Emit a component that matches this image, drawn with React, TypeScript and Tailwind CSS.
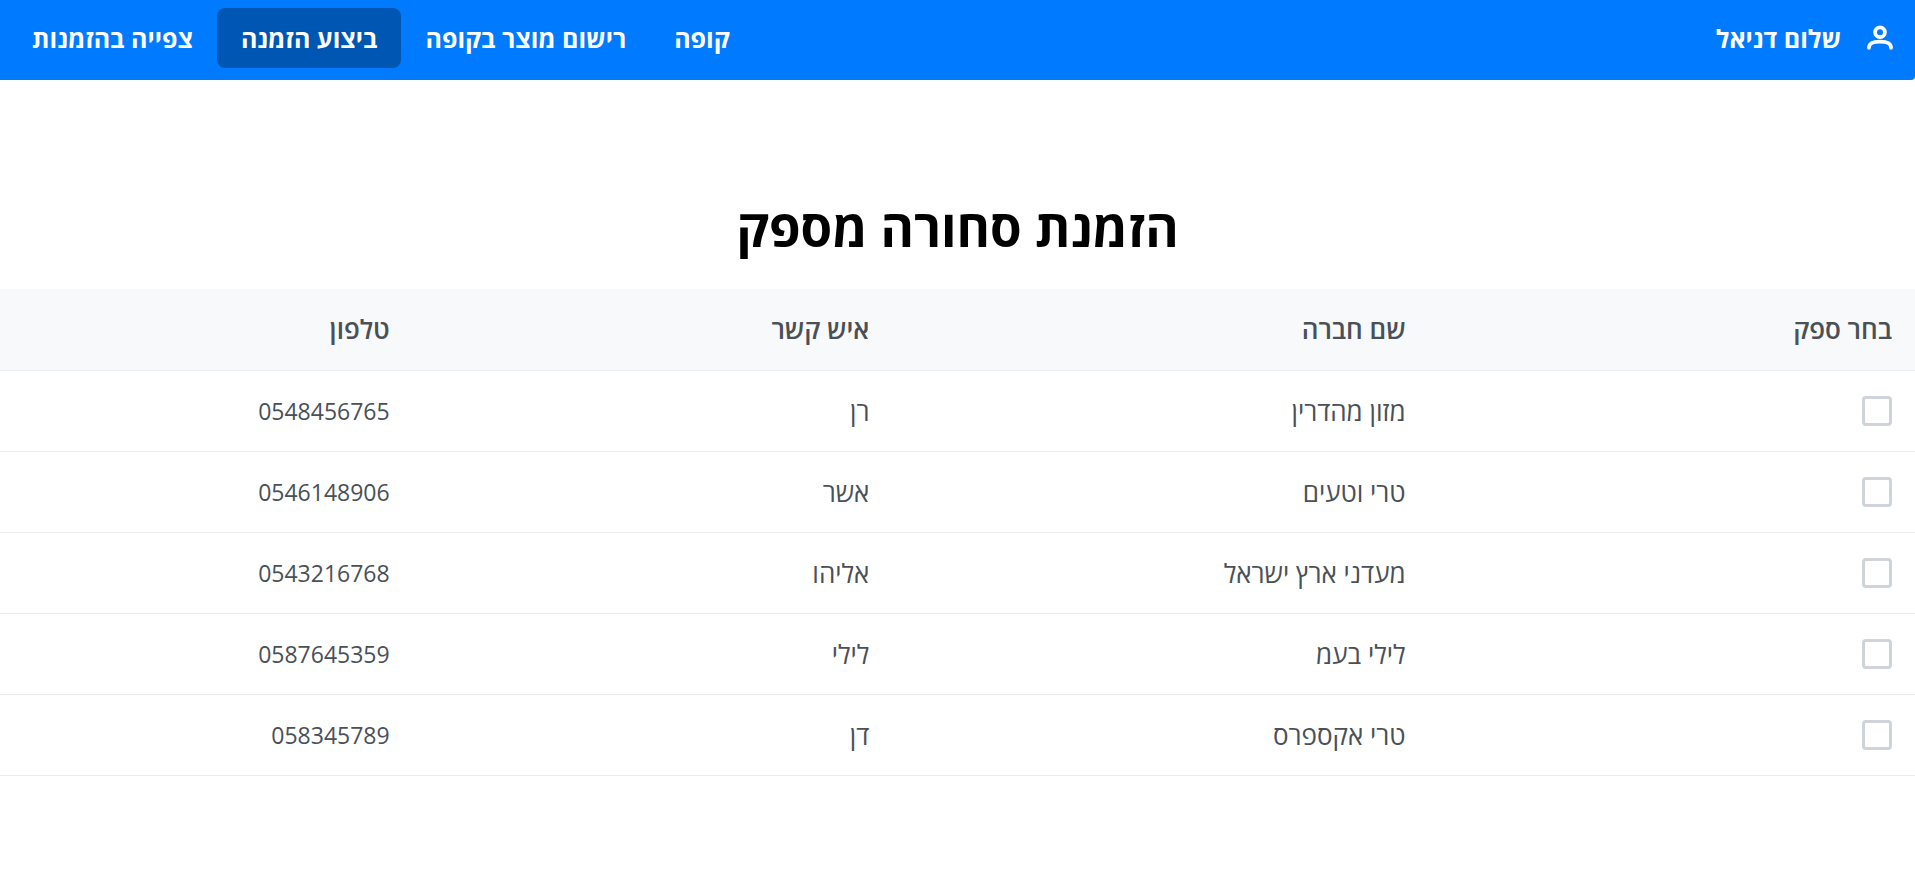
import { useState } from "react";

interface Supplier {
  company: string;
  contact: string;
  phone: string;
}

const suppliers: Supplier[] = [
  { company: "מזון מהדרין", contact: "רן", phone: "0548456765" },
  { company: "טרי וטעים", contact: "אשר", phone: "0546148906" },
  { company: "מעדני ארץ ישראל", contact: "אליהו", phone: "0543216768" },
  { company: "לילי בעמ", contact: "לילי", phone: "0587645359" },
  { company: "טרי אקספרס", contact: "דן", phone: "058345789" },
];

const links = ["קופה", "רישום מוצר בקופה", "ביצוע הזמנה", "צפייה בהזמנות"];

function UserIcon() {
  return (
    <svg viewBox="0 0 26 26" className="size-[26px]" fill="none" stroke="currentColor" strokeWidth="3.8" strokeLinecap="round" aria-hidden="true">
      <circle cx="13" cy="7.2" r="4.9" />
      <path d="M2 22.8C2 18.6 4.8 16.6 13 16.6S24 18.6 24 22.8" />
    </svg>
  );
}

function NavBar() {
  return (
    <header className="flex h-20 items-start justify-between rounded-br-sm bg-[#007bff] px-2 pt-2 text-white">
      <div className="flex h-[60px] items-center gap-[26px] pr-[14px]">
        <UserIcon />
        <span className="pt-0.5 text-[25px] font-bold">שלום דניאל</span>
      </div>
      <nav className="flex">
        {links.map((link) => (
          <a
            key={link}
            href="#"
            className={
              link === "ביצוע הזמנה"
                ? "flex h-[60px] items-center rounded-lg bg-[#0056b3] px-6 pt-0.5 text-[25px] font-bold"
                : "flex h-[60px] items-center rounded-lg px-6 pt-0.5 text-[25px] font-bold"
            }
          >
            {link}
          </a>
        ))}
      </nav>
    </header>
  );
}

export default function App() {
  const [selected, setSelected] = useState<string[]>([]);

  const toggle = (phone: string) =>
    setSelected((current) =>
      current.includes(phone) ? current.filter((p) => p !== phone) : [...current, phone]
    );

  return (
    <div dir="rtl" lang="he" className="min-h-screen bg-white font-['Open_Sans','Noto_Sans',sans-serif]">
      <NavBar />
      <main>
        <h1 className="pt-[115px] pb-[30px] text-center text-[51px] leading-[64px] font-bold text-black">הזמנת סחורה מספק</h1>
        <table className="w-full table-fixed border-collapse text-right text-[26px] leading-8 text-[#495057]">
          <colgroup>
            <col className="w-[25.4%]" />
            <col className="w-[28%]" />
            <col className="w-[25%]" />
            <col />
          </colgroup>
          <thead>
            <tr className="h-[81px] border-b border-[#e9ecef] bg-[#f8f9fa]">
              <th className="px-[23px] font-semibold">בחר ספק</th>
              <th className="px-[23px] font-semibold">שם חברה</th>
              <th className="px-[23px] font-semibold">איש קשר</th>
              <th className="px-6 font-semibold">טלפון</th>
            </tr>
          </thead>
          <tbody>
            {suppliers.map((s) => (
              <tr key={s.phone} className="h-[81px] border-b border-[#e9ecef]">
                <td className="px-[23px]">
                  <input
                    type="checkbox"
                    aria-label={s.company}
                    checked={selected.includes(s.phone)}
                    onChange={() => toggle(s.phone)}
                    className="block size-[30px] appearance-none rounded-sm border-3 border-[#ced4da] bg-white checked:border-[#007bff] checked:bg-[#007bff]"
                  />
                </td>
                <td className="px-[23px]">{s.company}</td>
                <td className="px-[23px]">{s.contact}</td>
                <td className="px-6 text-[23px]">{s.phone}</td>
              </tr>
            ))}
          </tbody>
        </table>
      </main>
    </div>
  );
}
